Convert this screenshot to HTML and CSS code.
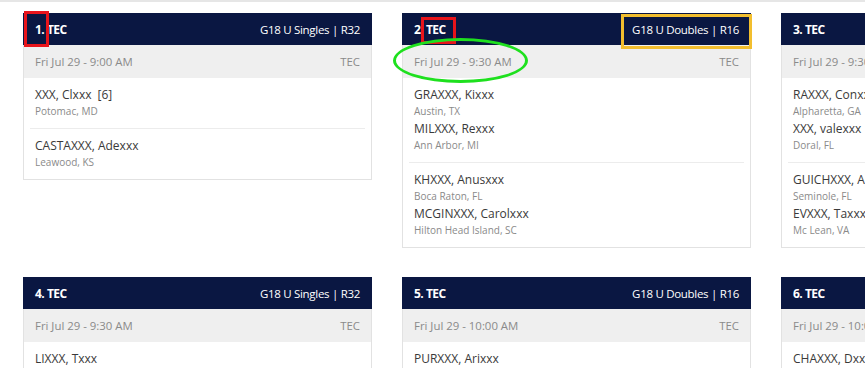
FILE: index.html
```html
<!DOCTYPE html>
<html lang="en">
<head>
    <meta charset="UTF-8">
    <meta name="viewport" content="width=device-width, initial-scale=1.0">
    <title>Match Schedule</title>
    <link rel="stylesheet" href="styles.css">
</head>
<body>
    <div class="schedule">
        <div class="match-grid">
            <div class="match-card">
                <div class="match-head">
                    <span class="court">1. TEC</span>
                    <span class="event">G18 U Singles | R32</span>
                </div>
                <div class="match-time">
                    <span>Fri Jul 29 - 9:00 AM</span>
                    <span>TEC</span>
                </div>
                <div class="team">
                    <div class="player">XXX, Clxxx <span class="seed">[6]</span></div>
                    <div class="city">Potomac, MD</div>
                </div>
                <div class="team">
                    <div class="player">CASTAXXX, Adexxx</div>
                    <div class="city">Leawood, KS</div>
                </div>
            </div>

            <div class="match-card">
                <div class="match-head">
                    <span class="court">2. TEC</span>
                    <span class="event">G18 U Doubles | R16</span>
                </div>
                <div class="match-time">
                    <span>Fri Jul 29 - 9:30 AM</span>
                    <span>TEC</span>
                </div>
                <div class="team">
                    <div class="player">GRAXXX, Kixxx</div>
                    <div class="city">Austin, TX</div>
                    <div class="player">MILXXX, Rexxx</div>
                    <div class="city">Ann Arbor, MI</div>
                </div>
                <div class="team">
                    <div class="player">KHXXX, Anusxxx</div>
                    <div class="city">Boca Raton, FL</div>
                    <div class="player">MCGINXXX, Carolxxx</div>
                    <div class="city">Hilton Head Island, SC</div>
                </div>
            </div>

            <div class="match-card">
                <div class="match-head">
                    <span class="court">3. TEC</span>
                    <span class="event">G18 U Doubles | R16</span>
                </div>
                <div class="match-time">
                    <span>Fri Jul 29 - 9:30 AM</span>
                    <span>TEC</span>
                </div>
                <div class="team">
                    <div class="player">RAXXX, Conxxx</div>
                    <div class="city">Alpharetta, GA</div>
                    <div class="player">XXX, valexxx</div>
                    <div class="city">Doral, FL</div>
                </div>
                <div class="team">
                    <div class="player">GUICHXXX, Annxxx</div>
                    <div class="city">Seminole, FL</div>
                    <div class="player">EVXXX, Taxxx</div>
                    <div class="city">Mc Lean, VA</div>
                </div>
            </div>

            <div class="match-card">
                <div class="match-head">
                    <span class="court">4. TEC</span>
                    <span class="event">G18 U Singles | R32</span>
                </div>
                <div class="match-time">
                    <span>Fri Jul 29 - 9:30 AM</span>
                    <span>TEC</span>
                </div>
                <div class="team">
                    <div class="player">LIXXX, Txxx</div>
                    <div class="city">Palo Alto, CA</div>
                </div>
            </div>

            <div class="match-card">
                <div class="match-head">
                    <span class="court">5. TEC</span>
                    <span class="event">G18 U Doubles | R16</span>
                </div>
                <div class="match-time">
                    <span>Fri Jul 29 - 10:00 AM</span>
                    <span>TEC</span>
                </div>
                <div class="team">
                    <div class="player">PURXXX, Arixxx</div>
                    <div class="city">Dallas, TX</div>
                </div>
            </div>

            <div class="match-card">
                <div class="match-head">
                    <span class="court">6. TEC</span>
                    <span class="event">G18 U Singles | R32</span>
                </div>
                <div class="match-time">
                    <span>Fri Jul 29 - 10:00 AM</span>
                    <span>TEC</span>
                </div>
                <div class="team">
                    <div class="player">CHAXXX, Dxxx</div>
                    <div class="city">Miami, FL</div>
                </div>
            </div>
        </div>

        <!-- review marks drawn over the screenshot -->
        <div class="mark mark-red mark-court1"></div>
        <div class="mark mark-red mark-court2"></div>
        <div class="mark mark-yellow mark-event2"></div>
        <div class="mark mark-green mark-time2"></div>
    </div>
</body>
</html>
```

FILE: styles.css
```css
body {
    margin: 0;
    font-family: "Open Sans", Arial, sans-serif;
    background-color: #fff;
    overflow: hidden;
}
.schedule {
    position: relative;
    border-top: 2px solid #e6e6e6;
    padding: 11px 0 0 23px;
}
.match-grid {
    display: grid;
    grid-template-columns: repeat(3, 349px);
    column-gap: 30px;
    row-gap: 29px;
    align-items: start;
}
.match-card {
    border: 1px solid #e2e2e2;
    border-top: none;
    background-color: #fff;
}
.match-head {
    display: flex;
    justify-content: space-between;
    align-items: center;
    height: 32px;
    padding: 0 12px;
    margin: 0 -1px;
    background-color: #0a1742;
    color: #fff;
    font-size: 11.5px;
}
.court {
    font-size: 12px;
    font-weight: bold;
    letter-spacing: -0.5px;
}
.event {
    letter-spacing: -0.3px;
}
.match-time {
    display: flex;
    justify-content: space-between;
    align-items: center;
    height: 33px;
    padding: 0 11px;
    background-color: #efefef;
    color: #8a8a8a;
    font-size: 11.4px;
}
.team {
    margin: 0 6px;
    padding: 8px 5px;
    border-bottom: 1px solid #ececec;
}
.team:last-child {
    border-bottom: none;
}
.player {
    font-size: 12px;
    line-height: 17px;
    color: #3a3a3a;
}
.seed {
    margin-left: 3px;
}
.city {
    font-size: 10px;
    line-height: 17px;
    color: #8a8a8a;
}
.mark {
    position: absolute;
    box-sizing: border-box;
    border: 3px solid;
}
.mark-red {
    border-color: #e8141b;
}
.mark-yellow {
    border-color: #f2be2e;
}
.mark-green {
    border-color: #1ee01e;
    border-radius: 50%;
}
.mark-court1 {
    left: 24px;
    top: 9px;
    width: 25px;
    height: 36px;
}
.mark-court2 {
    left: 421px;
    top: 15px;
    width: 35px;
    height: 27px;
}
.mark-event2 {
    left: 621px;
    top: 12px;
    width: 131px;
    height: 35px;
}
.mark-time2 {
    left: 393px;
    top: 36px;
    width: 135px;
    height: 45px;
}
```
